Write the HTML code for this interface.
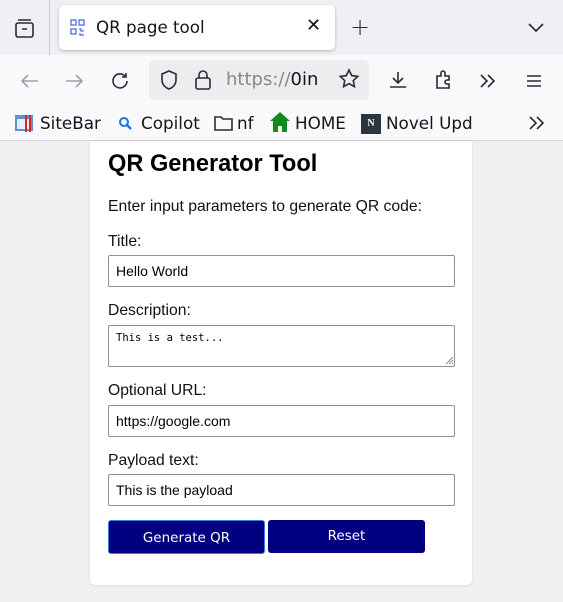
<!DOCTYPE html>
<html><head><style>
*{box-sizing:border-box;margin:0;padding:0}
body{width:563px;height:602px;overflow:hidden;background:#f0f0f0;font-family:"Liberation Sans",sans-serif;position:relative}
.abs{position:absolute}
.ui{font-family:"DejaVu Sans",sans-serif}
.tabs{left:0;top:0;width:563px;height:55px;background:#f0f0f4}
.tab{left:59px;top:5px;width:276px;height:45px;background:#fff;border-radius:5px;box-shadow:0 1px 3px rgba(0,0,0,.25)}
.nav{left:0;top:55px;width:563px;height:86px;background:#f9f9fb;border-bottom:1px solid #d0d0d6}
.url{left:149px;top:60px;width:220px;height:40px;background:#ededf0;border-radius:5px}
.card{left:90px;top:141px;width:382px;height:444px;background:#fff;border-radius:0 0 5px 5px;box-shadow:0 1px 3px rgba(0,0,0,.08)}
.lbl{left:108px;font-size:15.7px;color:#111}
.inp{left:108px;width:347px;height:32px;border:1px solid #8f8f9d;border-radius:2px;font-size:14px;padding:7px 7px;color:#000;background:#fff}
.btn{top:520px;height:34px;background:#000080;color:#fff;font-family:"DejaVu Sans",sans-serif;font-size:13.5px;text-align:center;line-height:34px;border-radius:3px}
.ic{stroke:#2b2a33;fill:none;stroke-width:1.6}
</style></head><body>
<div class="abs tabs"></div>
<svg class="abs" style="left:14px;top:18px" width="22" height="22" viewBox="0 0 22 22"><rect x="2" y="5" width="17" height="14" rx="2" class="ic"/><path d="M4 2h13M8 11h5" class="ic"/></svg>
<div class="abs" style="left:49px;top:0;width:1px;height:55px;background:#ccc"></div>
<div class="abs tab"></div>
<svg class="abs" style="left:70px;top:19px" width="16" height="18" viewBox="0 0 16 18"><g fill="none" stroke="#4a6fe0" stroke-width="1.3"><rect x="1" y="1" width="5" height="5"/><rect x="9" y="1" width="5" height="5"/><rect x="1" y="10" width="5" height="5"/><path d="M9 10h2v2h3M10 14v2h4"/></g></svg>
<div class="abs ui" style="left:96px;top:17px;font-size:16.7px;color:#15141a">QR page tool</div>
<div class="abs ui" style="left:306px;top:15px;font-size:18px;color:#15141a">✕</div>
<div class="abs ui" style="left:350px;top:13px;font-size:24px;color:#333;font-weight:300">+</div>
<svg class="abs" style="left:527px;top:21px" width="18" height="12"><path d="M2 3l7 7 7-7" class="ic"/></svg>
<div class="abs nav"></div>
<svg class="abs" style="left:18px;top:69px" width="24" height="24"><path d="M20 12H4M10 6l-6 6 6 6" stroke="#a0a0a8" stroke-width="1.6" fill="none"/></svg>
<svg class="abs" style="left:62px;top:69px" width="24" height="24"><path d="M4 12h16M14 6l6 6-6 6" stroke="#a0a0a8" stroke-width="1.6" fill="none"/></svg>
<svg class="abs" style="left:108px;top:69px" width="24" height="24"><path d="M19 12a7 7 0 1 1-2-5M18 4v4h-4" class="ic"/></svg>
<div class="abs url"></div>
<svg class="abs" style="left:158px;top:68px" width="22" height="24"><path d="M11 3l7 3v6c0 5-4 8-7 9-3-1-7-4-7-9V6z" class="ic"/></svg>
<svg class="abs" style="left:192px;top:67px" width="22" height="26"><rect x="4" y="11" width="14" height="11" rx="2" class="ic"/><path d="M7 11V8a4 4 0 0 1 8 0v3" class="ic"/></svg>
<div class="abs ui" style="left:226px;top:69px;font-size:18px;color:#888;white-space:nowrap;width:92px;overflow:hidden">https://<span style="color:#15141a">0ink.</span></div>
<svg class="abs" style="left:337px;top:67px" width="24" height="24"><path d="M12 3l2.7 5.6 6 .8-4.4 4.2 1.1 6L12 16.7 6.6 19.6l1.1-6L3.3 9.4l6-.8z" class="ic"/></svg>
<svg class="abs" style="left:386px;top:68px" width="24" height="24"><path d="M12 4v11M7 10l5 5 5-5M4 19h16" class="ic"/></svg>
<svg class="abs" style="left:432px;top:68px" width="24" height="24"><path d="M5 8h4V5a2 2 0 0 1 4 0v3h4v4h-2a2 2 0 0 0 0 4h2v4H5z" class="ic"/></svg>
<svg class="abs" style="left:476px;top:69px" width="24" height="24"><path d="M5 6l6 6-6 6M12 6l6 6-6 6" class="ic"/></svg>
<svg class="abs" style="left:522px;top:69px" width="24" height="24"><path d="M5 7h14M5 12h14M5 17h14" class="ic"/></svg>
<svg class="abs" style="left:14px;top:113px" width="20" height="20"><rect x="1" y="2" width="18" height="16" fill="#5b8fd6"/><rect x="3" y="6" width="14" height="10" fill="#e8f0fb"/><path d="M12 2v17M16 2v17" stroke="#e02020" stroke-width="2"/></svg>
<div class="abs ui" style="left:40px;top:113px;font-size:16.8px;color:#15141a">SiteBar</div>
<svg class="abs" style="left:118px;top:116px" width="14" height="14"><circle cx="6" cy="6" r="4" stroke="#1a73e8" stroke-width="2" fill="none"/><path d="M9 9l4 4" stroke="#1a73e8" stroke-width="2.4"/></svg>
<div class="abs ui" style="left:141px;top:113px;font-size:16.8px;color:#15141a">Copilot</div>
<svg class="abs" style="left:214px;top:114px" width="20" height="18"><path d="M1 3h6l2 2h9v11H1z" class="ic"/></svg>
<div class="abs ui" style="left:237px;top:113px;font-size:16.8px;color:#15141a">nf</div>
<svg class="abs" style="left:269px;top:111px" width="22" height="22"><path d="M11 1L1 10h3v11h5v-6h4v6h5V10h3z" fill="#138a1c"/></svg>
<div class="abs ui" style="left:295px;top:113px;font-size:16.8px;color:#15141a">HOME</div>
<div class="abs" style="left:361px;top:114px;width:20px;height:20px;background:#2a3540;color:#fff;font:bold 10px 'Liberation Serif',serif;text-align:center;line-height:20px">N</div>
<div class="abs ui" style="left:386px;top:113px;font-size:16.8px;color:#15141a">Novel Upd</div>
<svg class="abs" style="left:526px;top:112px" width="22" height="22"><path d="M4 5l6 6-6 6M11 5l6 6-6 6" class="ic"/></svg>

<div class="abs card"></div>
<div class="abs" style="left:108px;top:151px;font-size:23.6px;font-weight:bold;color:#000">QR Generator Tool</div>
<div class="abs lbl" style="top:198px">Enter input parameters to generate QR code:</div>
<div class="abs lbl" style="top:233px">Title:</div>
<div class="abs inp" style="top:255px">Hello World</div>
<div class="abs lbl" style="top:302px">Description:</div>
<div class="abs inp" style="top:325px;height:42px;font-family:'DejaVu Sans Mono',monospace;font-size:10.5px;padding:6px 7px">This is a test...</div>
<svg class="abs" style="left:445px;top:356px" width="9" height="9"><path d="M8 1L1 8M8 4L4 8M8 7L7 8" stroke="#888" stroke-width="1"/></svg>
<div class="abs lbl" style="top:382px">Optional URL:</div>
<div class="abs inp" style="top:405px">https://google.com</div>
<div class="abs lbl" style="top:452px">Payload text:</div>
<div class="abs inp" style="top:474px">This is the payload</div>
<div class="abs btn" style="left:108px;width:157px;border:1px solid #3a7be0">Generate QR</div>
<div class="abs btn" style="left:268px;width:157px;height:33px;line-height:33px">Reset</div>
</body></html>
